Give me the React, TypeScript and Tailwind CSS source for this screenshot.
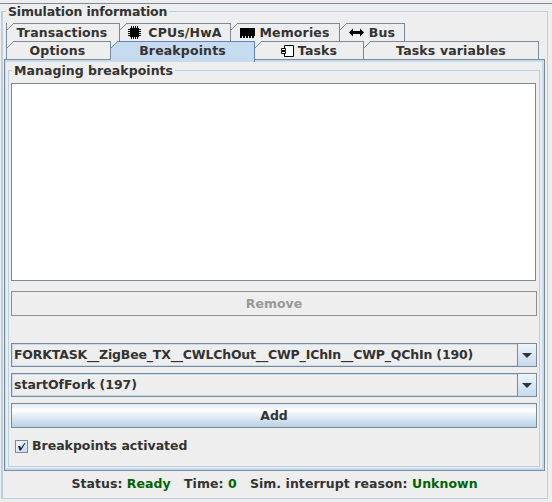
import type { ReactNode } from 'react';

const CpuIcon = () => (
  <svg width="13" height="13" viewBox="0 0 13 13" className="mr-[7px]">
    <rect x="2" y="2" width="9" height="9" fill="#000" />
    <path d="M3 0h1v13H3zM5 0h1v13H5zM7 0h1v13H7zM9 0h1v13H9zM0 3h13v1H0zM0 5h13v1H0zM0 7h13v1H0zM0 9h13v1H0z" fill="#000" />
  </svg>
);

const MemoryIcon = () => (
  <svg width="15" height="10" viewBox="0 0 15 10" className="mr-[4px]">
    <path d="M0 0h15v8h-1v2h-2V8h-1v2H9V8H8v2H6V8H5v2H3V8H2v2H0z" fill="#000" />
  </svg>
);

const BusIcon = () => (
  <svg width="15" height="9" viewBox="0 0 15 9" className="mr-[5px]">
    <path d="M0 4.5 4 0.5v2.5h7V0.5l4 4-4 4V6H4v2.5z" fill="#000" />
  </svg>
);

const TaskIcon = () => (
  <svg width="13" height="12" viewBox="0 0 13 12" className="mr-[4px]">
    <path d="M3.5 0.5h9v11h-9z" fill="#fbfbfb" stroke="#000" />
    <path d="M0.5 3.5h4v2h-4zM0.5 6.5h4v2h-4z" fill="#fbfbfb" stroke="#000" />
  </svg>
);

type TabProps = { w: string; active?: boolean; children: ReactNode };

const Tab = ({ w, active, children }: TabProps) => (
  <div
    className={`relative flex items-center justify-center border-t border-r first:border-l first:pr-[2px] tracking-[0.15px] ${w} ${
      active ? 'bg-[#c6daf0] border-[#6382bf] z-10 -mb-[3px] pb-[3px]' : 'border-[#7a8a99]'
    }`}
  >
    <svg width="7" height="7" viewBox="0 0 7 7" className="absolute left-0 top-[-1px]">
      <path d="M0 7 7 0H0z" fill="#eeeeee" />
      <path d="M0 7 7 0" stroke={active ? '#6382bf' : '#7a8a99'} fill="none" />
    </svg>
    {children}
  </div>
);

const Combo = ({ text, className }: { text: string; className?: string }) => (
  <div className="flex h-[24px] border border-[#7a8a99] shadow-[inset_1px_1px_0_#c6daf0,inset_-1px_-1px_0_#c6daf0]">
    <div className={`flex-1 flex items-center pl-[2px] pb-[1px] ${className ?? ''}`}>{text}</div>
    <div className="w-[19px] flex items-center justify-center border-l border-[#7a8a99] bg-[linear-gradient(#eef4fa,#c6daf0)]">
      <svg width="10" height="5" viewBox="0 0 10 5">
        <path d="M0 0h10L5 5z" fill="#333" />
      </svg>
    </div>
  </div>
);

export default function App() {
  return (
    <div
      className="w-[552px] h-[502px] bg-[#eeeeee] text-[#333333] text-[12.5px] leading-[16px] font-bold pt-[3px] overflow-hidden"
      style={{ fontFamily: '"DejaVu Sans", sans-serif' }}
    >
      <div className="border-t border-[#7a8a99] pt-[7px] pl-[1px] pr-[4px]">
        <div className="relative h-[488px] border border-[#b8cfe5] border-l-2 pl-[1px] pr-[2px] pt-[11px]">
          <span className="absolute left-[3px] top-[-8px] bg-[#eeeeee] px-[2px] tracking-[-0.15px]">Simulation information</span>

          <div className="flex pl-[2px] h-[18px]">
            <Tab w="w-[114px]">Transactions</Tab>
            <Tab w="w-[111px]"><CpuIcon />CPUs/HwA</Tab>
            <Tab w="w-[109px]"><MemoryIcon />Memories</Tab>
            <Tab w="w-[65px]"><BusIcon />Bus</Tab>
          </div>
          <div className="flex pl-[2px] h-[18px] relative">
            <Tab w="w-[105px]">Options</Tab>
            <Tab w="w-[144px]" active>Breakpoints</Tab>
            <Tab w="w-[109px]"><TaskIcon />Tasks</Tab>
            <Tab w="w-[175px]">Tasks variables</Tab>
          </div>

          <div className="h-[412px] border border-[#7a8a99] pt-[10px] pl-[3px] pr-[4px] shadow-[inset_0_2px_0_#c6daf0,inset_1px_0_0_#c6daf0,inset_-2px_0_0_#c6daf0,inset_0_-2px_0_#c6daf0]">
            <div className="relative h-[397px] border border-[#b8cfe5] px-[2px] pt-[12px]">
              <span className="absolute left-[3px] top-[-8px] bg-[#eeeeee] px-[2px] tracking-[0.05px]">Managing breakpoints</span>
              <div className="h-[198px] mr-[1px] bg-white border border-[#7a8a99]" />
              <div className="mt-[10px] h-[25px] border border-[#8e8e8e] flex items-center justify-center text-[#999999]">
                Remove
              </div>
              <div className="mt-[27px]">
                <Combo text="FORKTASK__ZigBee_TX__CWLChOut__CWP_IChIn__CWP_QChIn (190)" className="tracking-[-0.18px]" />
              </div>
              <div className="mt-[6px]">
                <Combo text="startOfFork (197)" />
              </div>
              <div className="mt-[6px] h-[25px] border border-[#7a8a99] flex items-center justify-center bg-[linear-gradient(#dde9f4,#ffffff_25%,#b8cfe5)]">
                Add
              </div>
              <div className="mt-[11px] pl-[4px] flex items-center">
                <div className="w-[13px] h-[13px] border border-[#7a8a99] bg-[linear-gradient(135deg,#f4f8fc,#c6daf0)] flex items-center justify-center">
                  <svg width="9" height="9" viewBox="0 0 9 9">
                    <path d="M1 4h2l1 2 3.500-5h1L4 8.500H2.500z" fill="#222" />
                  </svg>
                </div>
                <span className="ml-[4px] -mt-[1px]">Breakpoints activated</span>
              </div>
            </div>
          </div>

          <div className="text-center mt-[5px] whitespace-pre tracking-[0.05px]">
            Status: <span className="text-[#006400]">Ready</span>{'   '}Time: <span className="text-[#006400]">0</span>{'   '}Sim. interrupt reason: <span className="text-[#006400]">Unknown</span>
          </div>
        </div>
      </div>
    </div>
  );
}
